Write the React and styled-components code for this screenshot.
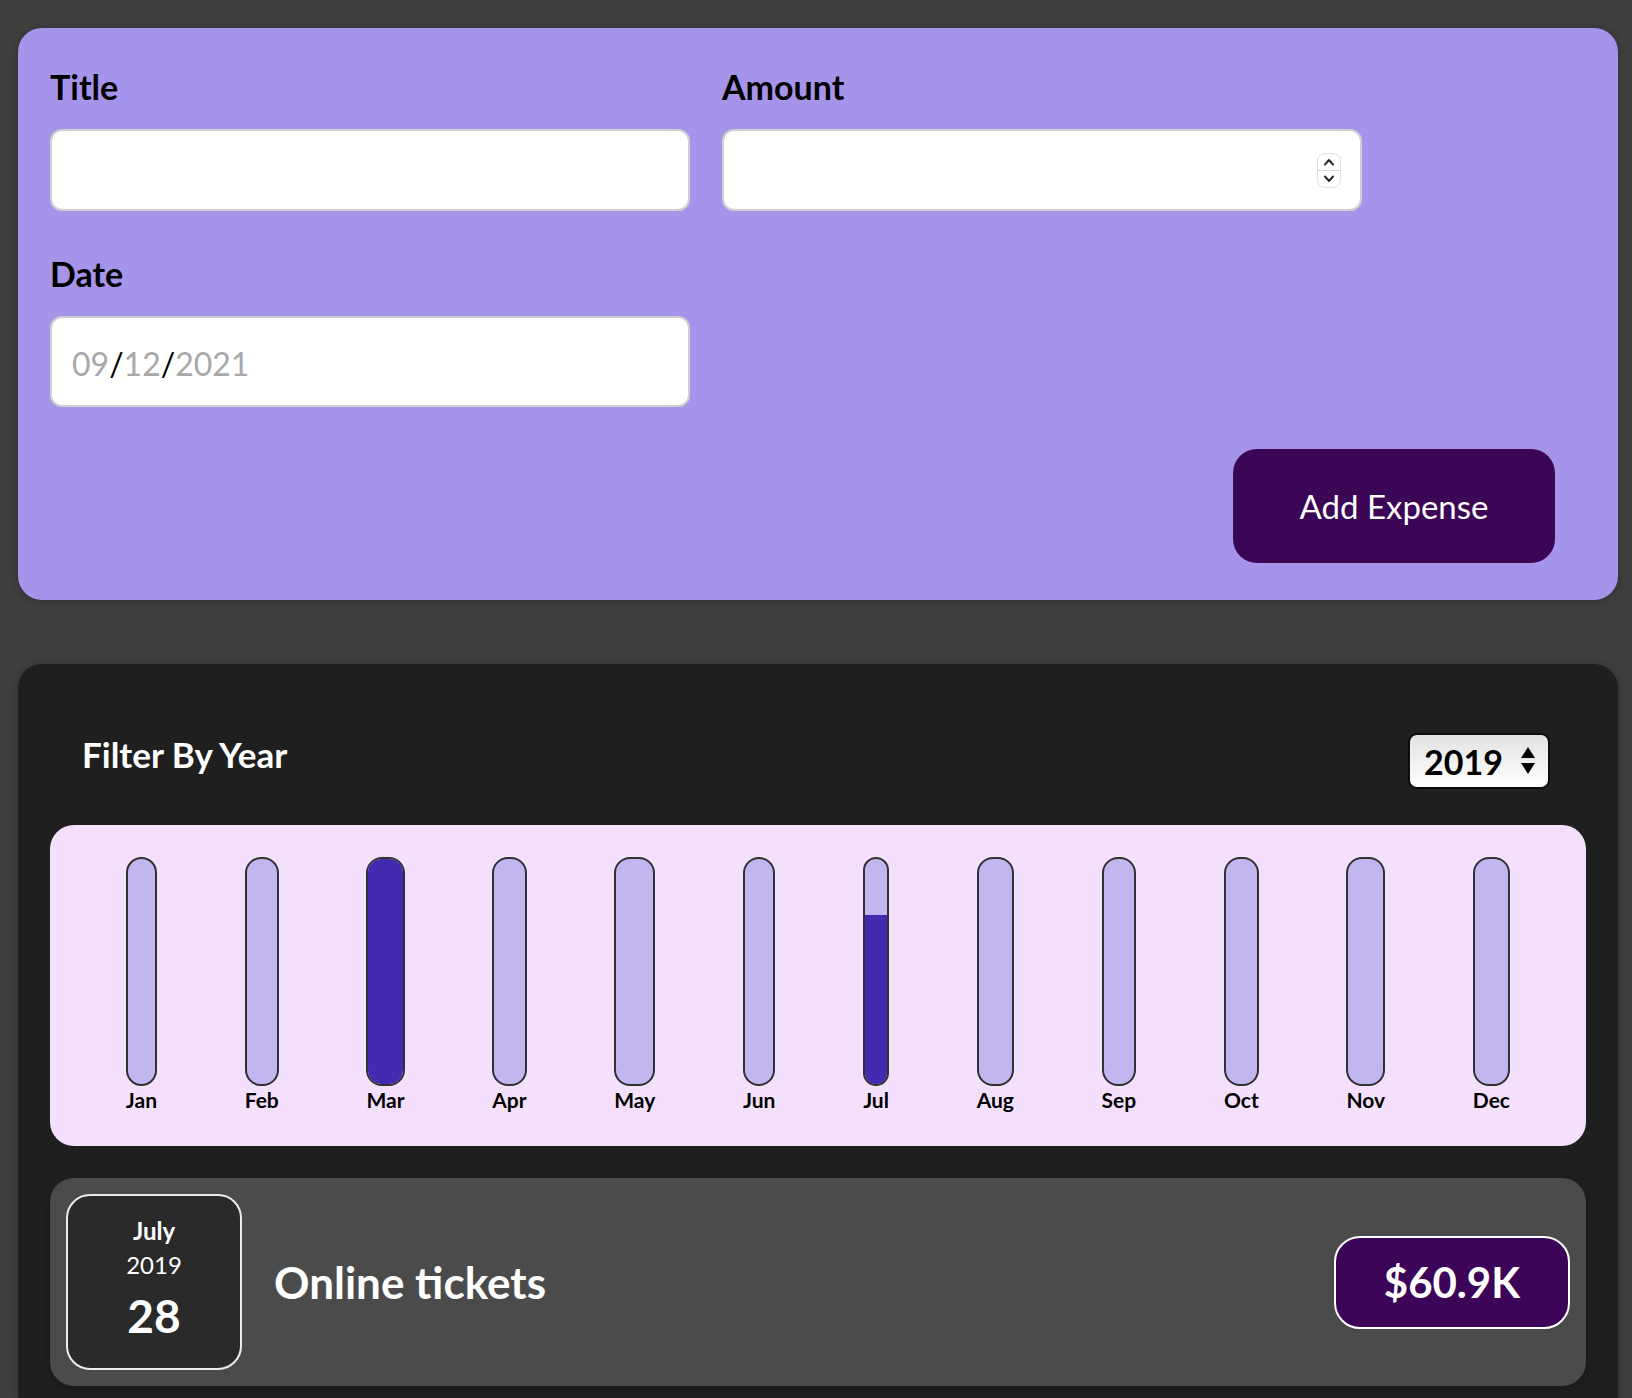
import React from 'react';
import styled, { createGlobalStyle, css } from 'styled-components';

const GlobalStyle = createGlobalStyle`
  * {
    box-sizing: border-box;
  }

  html,
  body {
    margin: 0;
    padding: 0;
  }

  body {
    background-color: #3f3f3f;
    font-family: Lato, 'Noto Sans', 'Liberation Sans', sans-serif;
  }
`;

const Page = styled.div`
  padding: 28px 0 0 18px;
`;

/* ---------- new expense form ---------- */

const FormCard = styled.form`
  width: 1600px;
  padding: 32px 32px 37px;
  border-radius: 24px;
  background-color: #a693ea;
  box-shadow: 0 1px 8px rgba(0, 0, 0, 0.25);
`;

const Controls = styled.div`
  display: flex;
  flex-wrap: wrap;
  gap: 36px 32px;
`;

const Control = styled.div`
  width: 640px;
`;

const Label = styled.label`
  display: block;
  margin-bottom: 16px;
  font-size: 34px;
  line-height: 53px;
  font-weight: 700;
  color: #000;
`;

const fieldBox = css`
  width: 100%;
  border: 2px solid #cfcfcf;
  border-radius: 12px;
  background-color: #fff;
`;

const TextInput = styled.input`
  ${fieldBox};
  display: block;
  height: 82px;
  padding: 8px 18px;
  font-family: inherit;
  font-size: 32px;
  outline: none;
`;

const AmountBox = styled.div`
  ${fieldBox};
  display: flex;
  align-items: center;
  height: 82px;
  padding: 0 19px 0 18px;
`;

const BareInput = styled.input`
  flex: 1;
  min-width: 0;
  border: none;
  outline: none;
  background: transparent;
  font-family: inherit;
  font-size: 32px;
`;

const Spinner = styled.div`
  display: flex;
  flex-direction: column;
  width: 24px;
  height: 35px;
  border: 1px solid #dedede;
  border-radius: 8px;
  overflow: hidden;
`;

const SpinHalf = styled.span`
  flex: 1;
  display: flex;
  align-items: center;
  justify-content: center;
  border-top: ${(p) => (p.$lower ? '1px solid #d6d6d6' : 'none')};
`;

const DateField = styled.div`
  ${fieldBox};
  display: flex;
  align-items: center;
  height: 91px;
  padding: 3px 20px 0;
  font-size: 32px;
`;

const DatePart = styled.span`
  color: ${(p) => (p.$sep ? '#000' : '#a8a8a8')};
`;

const Actions = styled.div`
  display: flex;
  justify-content: flex-end;
  margin-top: 42px;
  padding-right: 31px;
`;

const AddButton = styled.button`
  width: 322px;
  height: 114px;
  padding: 0;
  border: none;
  border-radius: 24px;
  background-color: #3c0657;
  color: #fff;
  font-family: inherit;
  font-size: 33px;
  cursor: pointer;
`;

/* ---------- expenses list ---------- */

const ExpensesCard = styled.section`
  width: 1600px;
  margin-top: 64px;
  padding: 32px;
  border-radius: 24px;
  background-color: #1f1f1f;
  box-shadow: 0 1px 8px rgba(0, 0, 0, 0.25);
`;

const FilterRow = styled.div`
  display: flex;
  align-items: center;
  justify-content: space-between;
  margin: 37px 0 36px;
  padding: 0 36px 0 32px;
  color: #fff;
`;

const FilterLabel = styled.label`
  margin-bottom: 14px;
  font-size: 35px;
  font-weight: 700;
`;

const YearSelect = styled.div`
  display: flex;
  align-items: center;
  justify-content: space-between;
  width: 142px;
  height: 56px;
  padding: 0 12px 0 14px;
  border: 2px solid #0d0d0d;
  border-radius: 9px;
  background: linear-gradient(#e2e2e2, #ffffff);
  color: #000;
  font-size: 34px;
  font-weight: 700;
`;

const Chart = styled.div`
  display: flex;
  justify-content: space-around;
  height: 321px;
  padding: 32px;
  border-radius: 24px;
  background-color: #f4e0fc;
`;

const ChartBar = styled.div`
  display: flex;
  flex-direction: column;
  align-items: center;
  height: 100%;
`;

const BarTrack = styled.div`
  flex: 1;
  display: flex;
  flex-direction: column;
  justify-content: flex-end;
  width: 100%;
  border: 2px solid #313131;
  border-radius: 16px;
  background-color: #c2b5f0;
  overflow: hidden;
`;

const BarFill = styled.div`
  width: 100%;
  background-color: #4429b1;
`;

const BarLabel = styled.div`
  font-size: 21px;
  font-weight: 700;
  line-height: 28px;
  color: #000;
`;

const ExpenseItem = styled.div`
  display: flex;
  align-items: center;
  margin-top: 32px;
  padding: 16px;
  border-radius: 24px;
  background-color: #4b4b4b;
  box-shadow: 0 2px 8px rgba(0, 0, 0, 0.25);
`;

const DateBox = styled.div`
  display: flex;
  flex-direction: column;
  align-items: center;
  justify-content: center;
  width: 176px;
  height: 176px;
  border: 2px solid #ececec;
  border-radius: 24px;
  background-color: #2a2a2a;
  color: #fff;
`;

const DateLine = styled.div`
  font-size: ${(p) => (p.$big ? '46px' : '24px')};
  font-weight: ${(p) => (p.$bold ? 700 : 400)};
  line-height: ${(p) => (p.$big ? '68px' : '34px')};
`;

const Description = styled.h2`
  flex: 1;
  margin: 0 32px;
  color: #fff;
  font-size: 44px;
  font-weight: 700;
`;

const Price = styled.div`
  padding: 16px 48px;
  border: 2px solid #fff;
  border-radius: 26px;
  background-color: #3c0558;
  color: #fff;
  font-size: 42px;
  font-weight: 700;
  line-height: 57px;
`;

const Chevron = ({ up }) => (
  <svg width="12" height="8" viewBox="0 0 12 8">
    <path
      d={up ? 'M2 6.5 L6 2 L10 6.5' : 'M2 1.5 L6 6 L10 1.5'}
      fill="none"
      stroke="#2b2b2b"
      strokeWidth="2"
      strokeLinecap="round"
      strokeLinejoin="round"
    />
  </svg>
);

const SelectArrows = () => (
  <svg width="16" height="30" viewBox="0 0 16 30">
    <path d="M8 1 L15 12 L1 12 Z" fill="#000" />
    <path d="M1 17 L15 17 L8 28 Z" fill="#000" />
  </svg>
);

const months = [
  { label: 'Jan', value: 0 },
  { label: 'Feb', value: 0 },
  { label: 'Mar', value: 81.2 },
  { label: 'Apr', value: 0 },
  { label: 'May', value: 0 },
  { label: 'Jun', value: 0 },
  { label: 'Jul', value: 60.9 },
  { label: 'Aug', value: 0 },
  { label: 'Sep', value: 0 },
  { label: 'Oct', value: 0 },
  { label: 'Nov', value: 0 },
  { label: 'Dec', value: 0 },
];

const App = () => {
  const max = Math.max(...months.map((m) => m.value));

  return (
    <Page>
      <GlobalStyle />
      <FormCard onSubmit={(e) => e.preventDefault()}>
        <Controls>
          <Control>
            <Label>Title</Label>
            <TextInput type="text" />
          </Control>
          <Control>
            <Label>Amount</Label>
            <AmountBox>
              <BareInput type="text" />
              <Spinner>
                <SpinHalf>
                  <Chevron up />
                </SpinHalf>
                <SpinHalf $lower>
                  <Chevron />
                </SpinHalf>
              </Spinner>
            </AmountBox>
          </Control>
          <Control>
            <Label>Date</Label>
            <DateField>
              <DatePart>09</DatePart>
              <DatePart $sep>/</DatePart>
              <DatePart>12</DatePart>
              <DatePart $sep>/</DatePart>
              <DatePart>2021</DatePart>
            </DateField>
          </Control>
        </Controls>
        <Actions>
          <AddButton type="submit">Add Expense</AddButton>
        </Actions>
      </FormCard>

      <ExpensesCard>
        <FilterRow>
          <FilterLabel>Filter By Year</FilterLabel>
          <YearSelect>
            2019
            <SelectArrows />
          </YearSelect>
        </FilterRow>

        <Chart>
          {months.map((m) => (
            <ChartBar key={m.label}>
              <BarTrack>
                <BarFill style={{ height: `${max ? (m.value / max) * 100 : 0}%` }} />
              </BarTrack>
              <BarLabel>{m.label}</BarLabel>
            </ChartBar>
          ))}
        </Chart>

        <ExpenseItem>
          <DateBox>
            <DateLine $bold>July</DateLine>
            <DateLine>2019</DateLine>
            <DateLine $big $bold>28</DateLine>
          </DateBox>
          <Description>Online tickets</Description>
          <Price>$60.9K</Price>
        </ExpenseItem>
      </ExpensesCard>
    </Page>
  );
};

export default App;
